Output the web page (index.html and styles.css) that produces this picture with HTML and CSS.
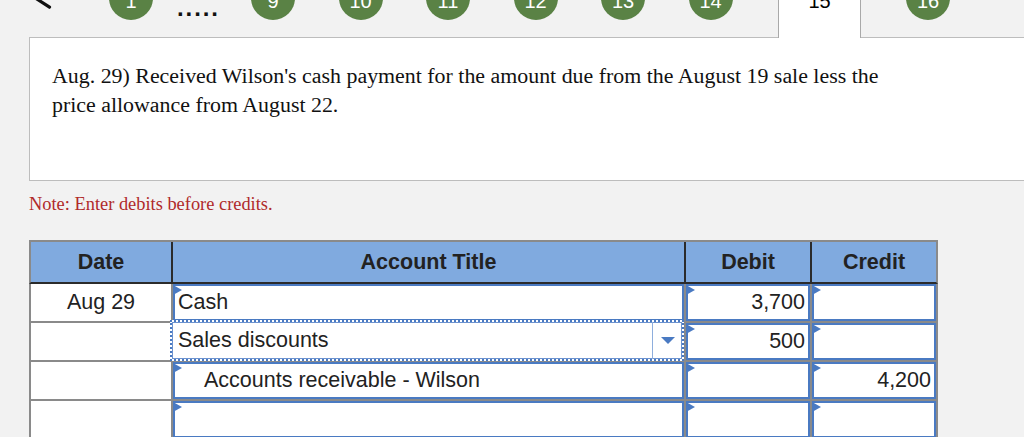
FILE: index.html
```html
<!DOCTYPE html>
<html lang="en">
<head>
<meta charset="utf-8">
<title>Journal entry</title>
<link rel="stylesheet" href="styles.css">
</head>
<body>
<div class="page">
  <nav class="steps">
    <div class="back">
      <svg width="30" height="44" viewBox="0 0 30 44"><polyline points="20,10.6 4.5,20.8 20.5,31.2" fill="none" stroke="#111" stroke-width="3.2" stroke-linecap="round" stroke-linejoin="round"/></svg>
    </div>
    <div class="step first"><span class="circle">1</span></div>
    <div class="ellipsis">.....</div>
    <div class="step"><span class="circle">9</span></div>
    <div class="step"><span class="circle">10</span></div>
    <div class="step"><span class="circle">11</span></div>
    <div class="step"><span class="circle">12</span></div>
    <div class="step"><span class="circle">13</span></div>
    <div class="step"><span class="circle">14</span></div>
    <div class="tab">15</div>
    <div class="step last"><span class="circle">16</span></div>
  </nav>

  <section class="card">
    <p class="prompt">Aug. 29) Received Wilson's cash payment for the amount due from the August 19 sale less the price allowance from August 22.</p>
  </section>

  <p class="note">Note: Enter debits before credits.</p>

  <div class="journal">
    <div class="jhead">
      <div class="th">Date</div>
      <div class="th">Account Title</div>
      <div class="th">Debit</div>
      <div class="th">Credit</div>
    </div>
    <div class="jbody">
      <div class="date">Aug 29</div>
      <div class="field">Cash</div>
      <div class="field num">3,700</div>
      <div class="field num"></div>

      <div class="date"></div>
      <div class="select"><span class="sel-text">Sales discounts</span><span class="arrow"></span></div>
      <div class="field num">500</div>
      <div class="field num"></div>

      <div class="date"></div>
      <div class="field indent">Accounts receivable - Wilson</div>
      <div class="field num"></div>
      <div class="field num">4,200</div>

      <div class="date"></div>
      <div class="field"></div>
      <div class="field num"></div>
      <div class="field num"></div>
    </div>
  </div>
</div>
</body>
</html>
```

FILE: styles.css
```css
html, body {
  margin: 0;
  overflow: hidden;
  background: #f2f2f2;
}

.page {
  padding-left: 29px;
}

/* ---------- step navigation ---------- */
.steps {
  display: flex;
  align-items: flex-start;
  height: 61px;
  margin-top: -24px;
}

.back {
  width: 58px;
  height: 44px;
}

.back svg {
  display: block;
}

.step {
  width: 87.5px;
  display: flex;
  justify-content: center;
}

.step.first {
  width: 88px;
}

.step.last {
  width: 88px;
  margin-left: 23px;
}

.circle {
  display: block;
  width: 44px;
  height: 44px;
  border-radius: 50%;
  background: #5a8245;
  color: #fff;
  font: 20px/51px "Liberation Sans", Arial, sans-serif;
  text-align: center;
  overflow: hidden;
}

.ellipsis {
  width: 54.25px;
  box-sizing: border-box;
  padding: 20.4px 0 0 2px;
  font: bold 24px/24px "Liberation Sans", Arial, sans-serif;
  letter-spacing: 1.9px;
  color: #111;
}

.tab {
  margin-left: 23.75px;
  width: 83px;
  height: 62px;
  box-sizing: border-box;
  background: #fff;
  border-left: 1px solid #a9a9a9;
  border-right: 1px solid #a9a9a9;
  text-align: center;
  font: 20px/51px "Liberation Sans", Arial, sans-serif;
  color: #000;
  position: relative;
  z-index: 1;
}

/* ---------- question card ---------- */
.card {
  height: 144px;
  box-sizing: border-box;
  margin-right: -60px;
  background: #fff;
  border: 1px solid #bdbdbd;
  padding: 23px 22px 0;
}

.prompt {
  margin: 0;
  max-width: 850px;
  font: 21.9px/29px "Liberation Serif", "Times New Roman", serif;
  color: #111;
}

.note {
  margin: 12px 0 0;
  font: 18.4px/22px "Liberation Serif", "Times New Roman", serif;
  color: #b02a2a;
}

/* ---------- journal table ---------- */
.journal {
  margin-top: 25px;
  width: 909px;
  font-family: "Liberation Sans", Arial, sans-serif;
  font-size: 21.5px;
  color: #222;
}

.jhead,
.jbody {
  display: grid;
  grid-template-columns: 140px 511px 124px 124px;
  column-gap: 2px;
}

.jhead {
  background: #2b2b2b;
  border: 2px solid #8a8a8a;
  border-bottom-color: #2b2b2b;
}

.th {
  background: #80aadf;
  font-weight: bold;
  text-align: center;
  line-height: 40px;
}

.jbody {
  row-gap: 2px;
  grid-auto-rows: 37px;
  background: #8a8a8a;
  padding: 0 2px 2px;
}

.date {
  background: #fff;
  text-align: center;
  line-height: 37px;
}

.field {
  position: relative;
  background: #fff;
  border: 2px solid #4a7ac2;
  box-sizing: border-box;
  padding: 0 3px;
  line-height: 33px;
  white-space: nowrap;
}

.field::before {
  content: "";
  position: absolute;
  left: -2px;
  top: -1px;
  border-top: 5px solid transparent;
  border-bottom: 5px solid transparent;
  border-left: 9px solid #4a7ac2;
}

.num {
  text-align: right;
}

.indent {
  padding-left: 29px;
}

.select {
  position: relative;
  z-index: 1;
  margin: -3px 0 -1px -3px;
  display: flex;
  align-items: center;
  background: #fff;
  border: 2px dotted #4a7ac2;
  box-shadow: inset 0 0 0 1px #6d93cf;
  white-space: nowrap;
}

.sel-text {
  flex: 1;
  padding-left: 6px;
}

.arrow {
  align-self: stretch;
  width: 30px;
  box-sizing: border-box;
  border-left: 1px solid #8eaedd;
  display: flex;
  align-items: center;
  justify-content: center;
}

.arrow::after {
  content: "";
  border-top: 7px solid #4a7ac2;
  border-left: 7.5px solid transparent;
  border-right: 7.5px solid transparent;
}
```
